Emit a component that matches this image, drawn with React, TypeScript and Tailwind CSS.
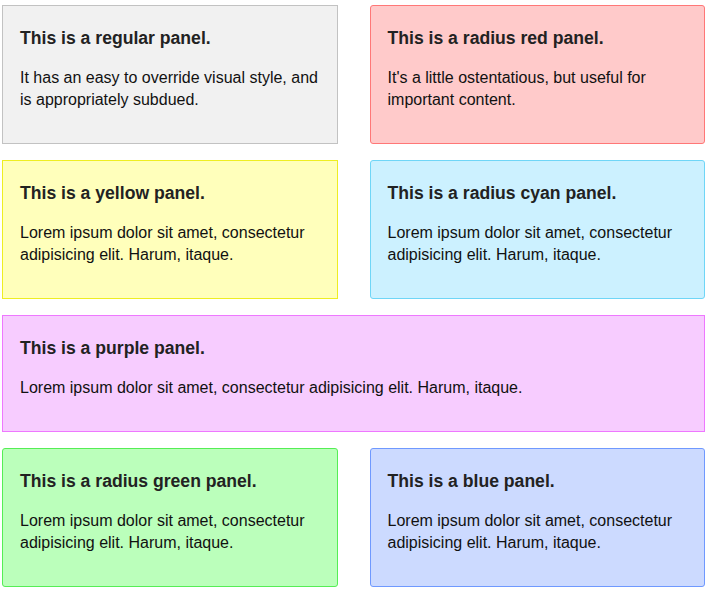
const LOREM = "Lorem ipsum dolor sit amet, consectetur adipisicing elit. Harum, itaque.";

const PANELS = [
  { t: "This is a regular panel.", b: "It has an easy to override visual style, and is appropriately subdued.", c: "bg-[#f1f1f1] border-[#c2c2c2]" },
  { t: "This is a radius red panel.", b: "It's a little ostentatious, but useful for important content.", c: "bg-[#ffcaca] border-[#ff7777] rounded-[3px]" },
  { t: "This is a yellow panel.", b: LOREM, c: "bg-[#ffffbb] border-[#eeee22]" },
  { t: "This is a radius cyan panel.", b: LOREM, c: "bg-[#ccf1ff] border-[#6fd6f7] rounded-[3px]" },
  { t: "This is a purple panel.", b: LOREM, c: "bg-[#f7ccff] border-[#ee77ff] col-span-2" },
  { t: "This is a radius green panel.", b: LOREM, c: "bg-[#bbffbb] border-[#55ee55] rounded-[3px]" },
  { t: "This is a blue panel.", b: LOREM, c: "bg-[#ccdaff] border-[#6f99ff] rounded-[3px]" },
];

export default function App() {
  return (
    <div className="min-h-screen bg-white pt-[5px] pl-[2px] font-['Liberation_Sans',Arial,sans-serif] text-[#222]">
      <div className="grid w-[703px] grid-cols-2 gap-x-[32px] gap-y-[16px]">
        {PANELS.map((p) => (
          <div key={p.t} className={`border px-[17px] pt-[22px] pb-[32px] ${p.c}`}>
            <h3 className="text-[17.6px] font-bold leading-[20px]">{p.t}</h3>
            <p className="mt-[19px] text-[16px] leading-[22px] text-[#111]">{p.b}</p>
          </div>
        ))}
      </div>
    </div>
  );
}
